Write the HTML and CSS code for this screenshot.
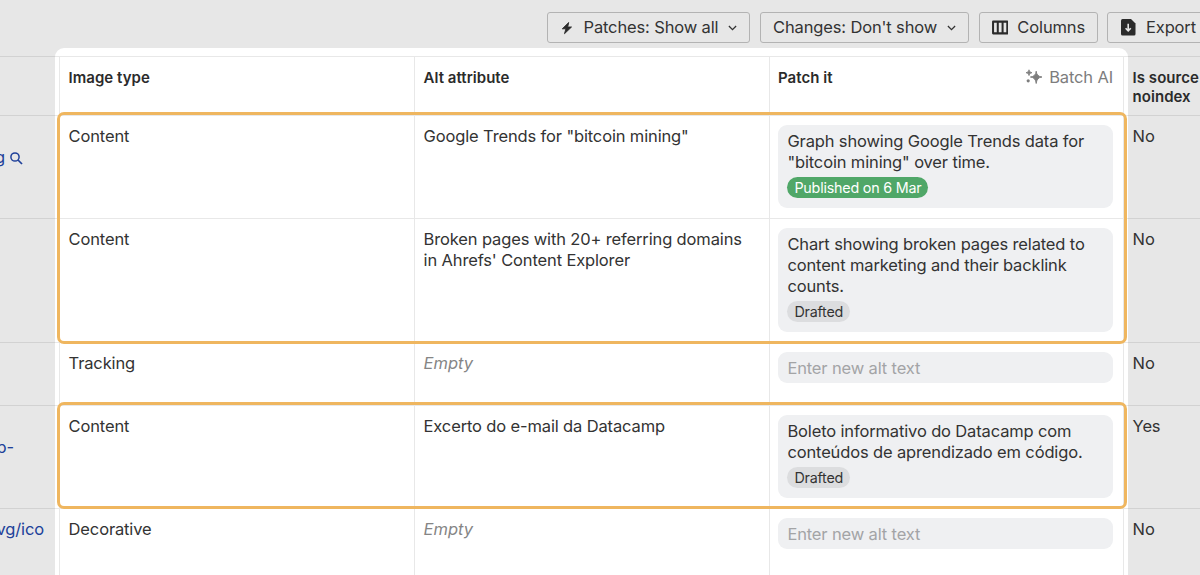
FILE: index.html
```html
<!DOCTYPE html>
<html lang="en">
<head>
<meta charset="utf-8">
<title>Image patches</title>
<link rel="stylesheet" href="styles.css">
</head>
<body>
<div class="spotlight"></div>
<header class="toolbar">
  <button class="btn btn-patches">
    <svg class="ico" width="14" height="16" viewBox="0 0 14 16"><path d="M8.700 2.500 2.300 8.800H5.900L4.500 13.700 11.500 7H7.700z" fill="#2b2b2b" stroke="#2b2b2b" stroke-width=".9" stroke-linejoin="round"/></svg>
    <span>Patches: Show all</span>
    <svg class="chev" width="9" height="6" viewBox="0 0 9 6"><path d="M.9 1 4.500 4.600 8.100 1" fill="none" stroke="#333" stroke-width="1.3"/></svg>
  </button>
  <button class="btn btn-changes">
    <span>Changes: Don't show</span>
    <svg class="chev" width="9" height="6" viewBox="0 0 9 6"><path d="M.9 1 4.500 4.600 8.100 1" fill="none" stroke="#333" stroke-width="1.3"/></svg>
  </button>
  <button class="btn btn-columns">
    <svg width="17" height="15" viewBox="0 0 17 15"><path d="M1.100 1.400h14.800v12.200H1.100zM6 1.500v12M11 1.500v12" fill="none" stroke="#2b2b2b" stroke-width="2.100" stroke-linejoin="round"/></svg>
    <span>Columns</span>
  </button>
  <button class="btn btn-export">
    <svg width="15" height="17" viewBox="0 0 15 17"><path d="M1.500 0h8.500L14.500 4.500v10.500q0 1.500-1.500 1.500H1.500Q0 16.500 0 15V1.500Q0 0 1.500 0z" fill="#2b2b2b"/><path d="M7.200 4.800v7M4.600 9.300l2.600 2.600 2.600-2.600" fill="none" stroke="#e7e7e7" stroke-width="1.600"/></svg>
    <span>Export</span>
  </button>
</header>
<main class="table">
  <div class="row row-head">
    <div class="cell cell-url"></div>
    <div class="cell">Image type</div>
    <div class="cell">Alt attribute</div>
    <div class="cell cell-patch"><span>Patch it</span>
      <span class="batch"><svg width="18" height="16" viewBox="0 0 18 16"><path d="M11.200 2.200Q11.700 7.500 17 8 11.700 8.500 11.200 14.500 10.700 8.500 5.400 8 10.700 7.500 11.200 2.200z" fill="#7d7d7d" stroke="#7d7d7d" stroke-width=".9" stroke-linejoin="round"/><path d="M4 .8Q4.200 3.500 7 3.700 4.200 3.900 4 6.600 3.800 3.900 1 3.700 3.800 3.500 4 .8z" fill="#7d7d7d" stroke="#7d7d7d" stroke-width=".8" stroke-linejoin="round"/><circle cx="3.200" cy="11.800" r="1.600" fill="#7d7d7d"/></svg>Batch AI</span>
    </div>
    <div class="cell cell-last">Is source noindex</div>
  </div>
  <div class="row row-1">
    <div class="cell cell-url link-mid"><span>g</span><svg width="13" height="13" viewBox="0 0 13 13"><circle cx="5" cy="5" r="4.100" fill="none" stroke="#20419a" stroke-width="1.500"/><path d="m8 8 4 4" stroke="#20419a" stroke-width="1.700"/></svg></div>
    <div class="cell">Content</div>
    <div class="cell">Google Trends for "bitcoin mining"</div>
    <div class="cell cell-patch"><div class="patch">Graph showing Google Trends data for "bitcoin mining" over time.<span class="badge badge-published">Published on 6 Mar</span></div></div>
    <div class="cell cell-last">No</div>
  </div>
  <div class="row row-2">
    <div class="cell cell-url"></div>
    <div class="cell">Content</div>
    <div class="cell">Broken pages with 20+ referring domains in Ahrefs' Content Explorer</div>
    <div class="cell cell-patch"><div class="patch">Chart showing broken pages related to content marketing and their backlink counts.<span class="badge">Drafted</span></div></div>
    <div class="cell cell-last">No</div>
  </div>
  <div class="row row-3">
    <div class="cell cell-url"></div>
    <div class="cell">Tracking</div>
    <div class="cell empty">Empty</div>
    <div class="cell cell-patch"><div class="patch placeholder">Enter new alt text</div></div>
    <div class="cell cell-last">No</div>
  </div>
  <div class="row row-4">
    <div class="cell cell-url link-mid link-wrap"><span>p-</span></div>
    <div class="cell">Content</div>
    <div class="cell">Excerto do e-mail da Datacamp</div>
    <div class="cell cell-patch"><div class="patch">Boleto informativo do Datacamp com conteúdos de aprendizado em código.<span class="badge">Drafted</span></div></div>
    <div class="cell cell-last">Yes</div>
  </div>
  <div class="row row-5">
    <div class="cell cell-url link-end"><span>vg/ico</span></div>
    <div class="cell">Decorative</div>
    <div class="cell empty">Empty</div>
    <div class="cell cell-patch"><div class="patch placeholder">Enter new alt text</div></div>
    <div class="cell cell-last">No</div>
  </div>
</main>
<div class="outline outline-a"></div>
<div class="outline outline-b"></div>
</body>
</html>
```

FILE: styles.css
```css
* { box-sizing: border-box; }
body {
  margin: 0;
  position: relative;
  width: 1200px;
  height: 575px;
  overflow: hidden;
  background: #e7e7e7;
  color: #333;
  font: 16.5px/21.2px Inter, "Liberation Sans", sans-serif;
  letter-spacing: -.14px;
}
.spotlight {
  position: absolute;
  left: 55px;
  top: 48px;
  width: 1073px;
  height: 540px;
  border-radius: 9px;
  background: #fff;
}
.toolbar {
  position: relative;
  display: flex;
  gap: 10px;
  height: 56px;
  padding: 12px 0 0 547px;
}
.btn {
  display: flex;
  flex: none;
  align-items: center;
  height: 31px;
  padding: 0 12px;
  border: 1px solid #b3b3b3;
  border-radius: 3px;
  background: transparent;
  color: #333;
  font: inherit;
  letter-spacing: -.14px;
  white-space: nowrap;
}
.btn-patches { width: 203px; }
.btn-changes { width: 209px; }
.btn-columns { width: 119px; gap: 9.5px; padding-left: 11.5px; }
.btn-export { width: 120px; gap: 10px; padding-left: 13px; margin-left: -1px; }
.ico { margin-right: 9.5px; }
.chev { margin-left: auto; }
.table { position: relative; }
.row {
  display: grid;
  grid-template-columns: 59px 355px 355px 354px 77px;
}
.row-head {
  height: 59px;
  font-size: 15px;
  line-height: 19px;
  font-weight: 600;
  letter-spacing: .03px;
  color: #2b2b2b;
}
.row-1, .row-4 { height: 103px; }
.row-2 { height: 124px; }
.row-3 { height: 63px; }
.row-5 { height: 67px; }
.cell {
  padding: 10px 20px 0 8.6px;
  border-top: 1px solid rgba(0, 0, 0, .09);
  border-left: 1px solid rgba(0, 0, 0, .09);
}
.row-head .cell { padding-top: 10.6px; }
.cell-url {
  display: flex;
  justify-content: flex-end;
  border-left: 0;
  color: #20419a;
}
.link-mid { justify-content: flex-start; align-items: flex-start; padding: 31px 0 0; }
.link-mid svg { margin: 4.5px 0 0 5.5px; }
.link-mid span { display: block; margin-left: -5px; }
.link-wrap span { margin-left: -3.5px; }
.link-end { padding-right: 15px; }
.row .cell-last { padding-right: 0; }
.cell-patch { padding: 9px 10px 0 8px; }
.row-head .cell-patch { display: flex; justify-content: space-between; }
.batch {
  display: flex;
  gap: 6px;
  height: 19px;
  align-items: center;
  color: #7d7d7d;
  font-size: 16.5px;
  font-weight: 400;
  letter-spacing: -.14px;
}
.patch {
  padding: 6px 20px 10.2px 9.4px;
  border-radius: 9px;
  background: #eff0f2;
}
.placeholder { padding-bottom: 3.8px; color: #a3a4a6; }
.empty { color: #858585; font-style: italic; letter-spacing: 0; }
.badge {
  display: block;
  width: fit-content;
  height: 21px;
  margin-top: 3.4px;
  padding: 0 7px;
  border-radius: 11px;
  background: #dcdddf;
  font-size: 14.3px;
  line-height: 21px;
  letter-spacing: -.2px;
}
.badge-published { background: #50a768; color: #fff; }
.outline {
  position: absolute;
  left: 57px;
  width: 1070px;
  border: 3px solid #efb65f;
  border-radius: 7px;
}
.outline-a { top: 112px; height: 232px; }
.outline-b { top: 402px; height: 107px; }
```
